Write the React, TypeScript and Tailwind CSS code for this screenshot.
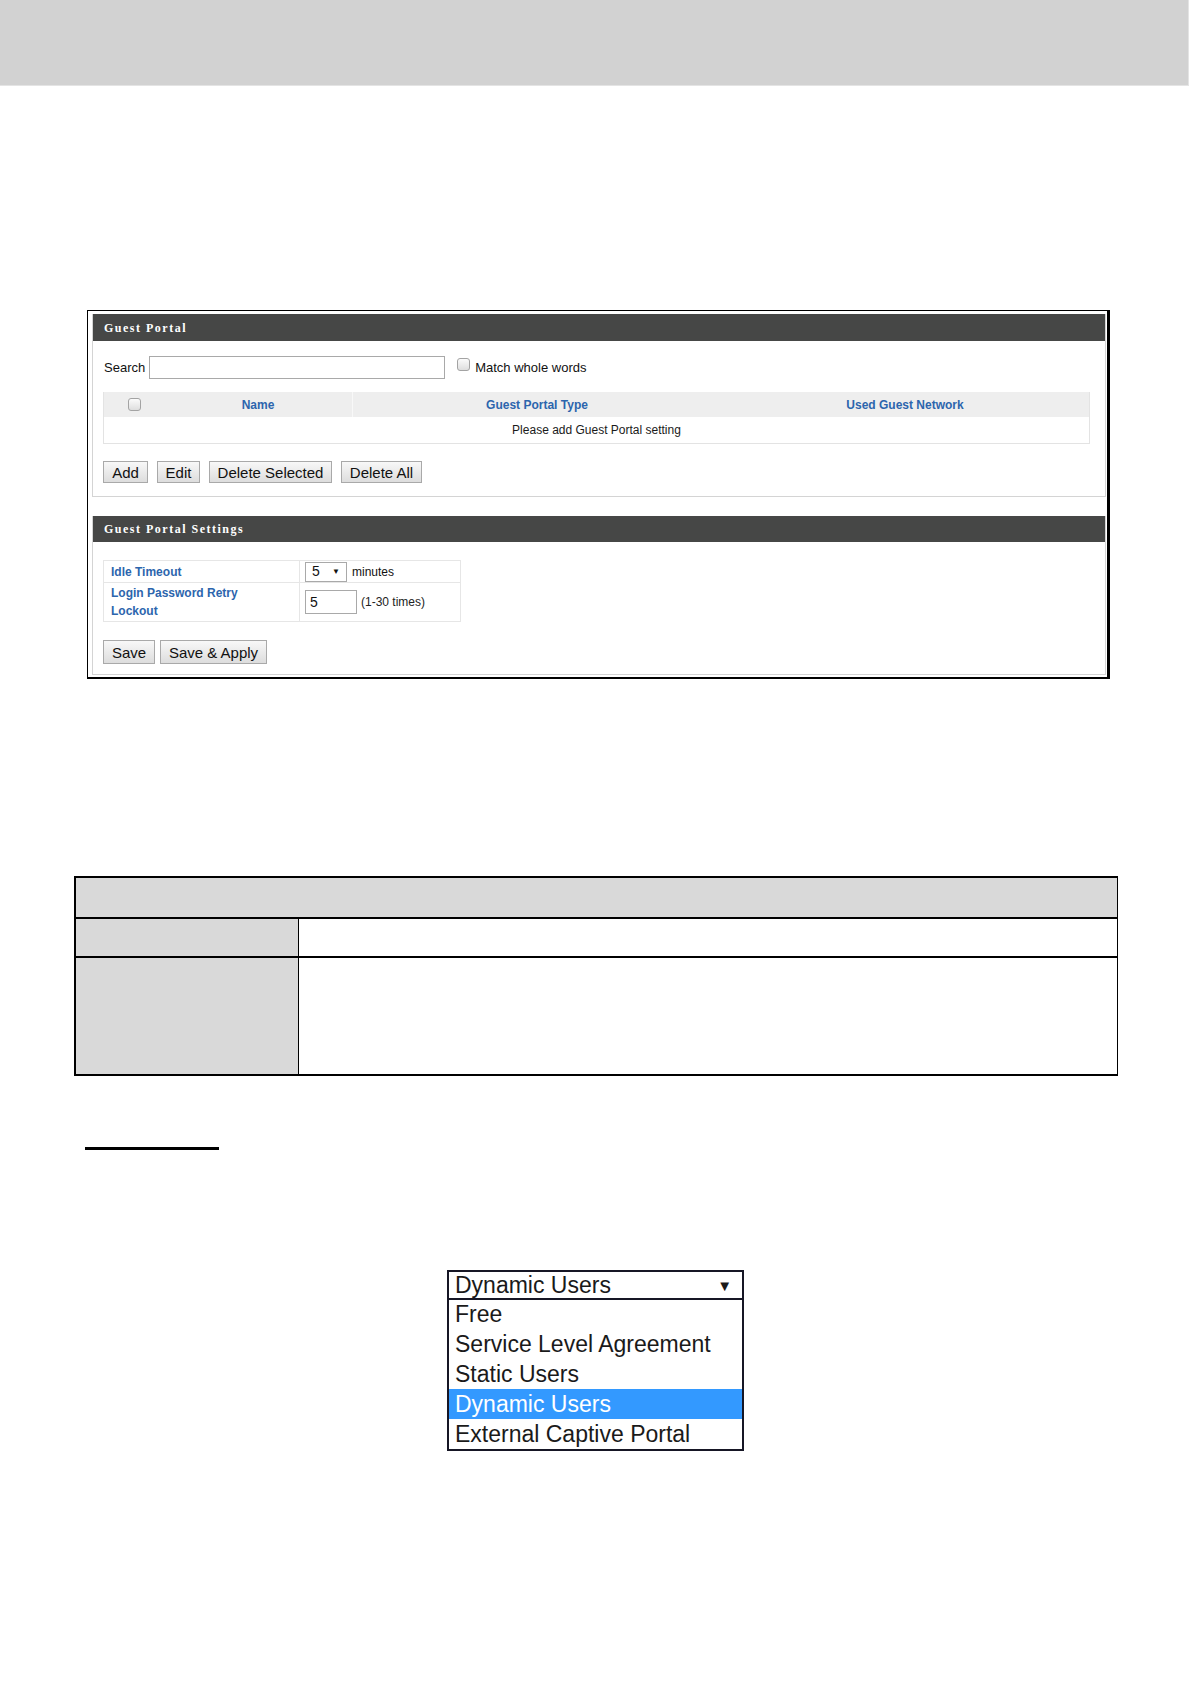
const sans = { fontFamily: '"Liberation Sans", Arial, sans-serif' };

function Btn({ label, w, h }: { label: string; w: string; h: string }) {
  return (
    <div
      className={`${w} ${h} flex items-center justify-center border border-[#a9a9a9] bg-linear-to-b from-[#f8f8f8] to-[#dddddd] text-[15px] text-[#111] leading-none`}
    >
      {label}
    </div>
  );
}

function PanelHeader({ title, h }: { title: string; h: string }) {
  return (
    <div
      className={`${h} bg-[#464746] flex items-center pl-[11px] text-white text-[12px] font-bold tracking-[1.5px]`}
      style={{ fontFamily: '"Liberation Serif", "Times New Roman", serif' }}
    >
      {title}
    </div>
  );
}

function CheckBox() {
  return <div className="w-[13px] h-[13px] rounded-[3px] border border-[#a3a3a3] bg-linear-to-b from-[#fbfbfb] to-[#dedede]" />;
}

const options = ["Free", "Service Level Agreement", "Static Users", "Dynamic Users", "External Captive Portal"];

export default function App() {
  return (
    <div className="w-[1191px] h-[1684px] bg-white relative" style={sans}>
      {/* top grey band */}
      <div className="w-[1189px] h-[86px] bg-[#d2d2d2] border-r border-b border-[#e4e4e4]" />

      {/* screenshot frame */}
      <div className="mt-[224px] ml-[87px] w-[1023px] border-l border-t border-r-[3px] border-b-2 border-black pt-[3px] pl-[4px] pr-[1px] pb-[2px]">
        {/* Guest Portal panel */}
        <div className="border border-t-0 border-[#d4d4d4]">
          <PanelHeader title="Guest Portal" h="h-[27px]" />
          <div className="pl-[10px] pr-[15px] pt-[15px] pb-[13px]">
            <div className="flex items-center h-[23px] text-[13px] text-[#111]">
              <span className="ml-[1px]">Search</span>
              <div className="ml-[4px] w-[296px] h-[23px] border border-[#a9a9a9] bg-white" />
              <div className="ml-[12px] self-start mt-[2px]">
                <CheckBox />
              </div>
              <span className="ml-[5px]">Match whole words</span>
            </div>

            <div className="mt-[13px] w-[987px] border border-t-0 border-[#e3e3e3]">
              <div className="h-[25px] bg-[#eeeeee] flex items-center text-[12px] font-bold text-[#2c65ad]">
                <div className="w-[60px] flex justify-center">
                  <CheckBox />
                </div>
                <div className="w-[189px] h-full flex items-center justify-center border-r border-[#f8f8f8]">Name</div>
                <div className="w-[368px] text-center">Guest Portal Type</div>
                <div className="flex-1 text-center">Used Guest Network</div>
              </div>
              <div className="h-[26px] flex items-center justify-center text-[12px] text-[#1a1a1a]">
                Please add Guest Portal setting
              </div>
            </div>

            <div className="mt-[17px] flex gap-[9px]">
              <Btn label="Add" w="w-[45px]" h="h-[22px]" />
              <Btn label="Edit" w="w-[43px]" h="h-[22px]" />
              <Btn label="Delete Selected" w="w-[123px]" h="h-[22px]" />
              <Btn label="Delete All" w="w-[81px]" h="h-[22px]" />
            </div>
          </div>
        </div>

        {/* Guest Portal Settings panel */}
        <div className="mt-[19px] border border-t-0 border-[#d4d4d4]">
          <PanelHeader title="Guest Portal Settings" h="h-[26px]" />
          <div className="pl-[10px] pt-[18px] pb-[10px]">
            <div className="w-[358px] border border-[#e6e6e6] text-[12px]">
              <div className="flex h-[22px] border-b border-[#e6e6e6]">
                <div className="w-[196px] border-r border-[#e6e6e6] flex items-center pl-[7px] font-bold text-[#2c65ad]">
                  Idle Timeout
                </div>
                <div className="flex-1 flex items-center pl-[5px]">
                  <div className="w-[42px] h-[20px] border border-[#a9a9a9] flex items-center pl-[6px] pr-[6px] justify-between text-[14px] text-[#111]">
                    <span>5</span>
                    <span className="text-[8px]">▼</span>
                  </div>
                  <span className="ml-[5px] text-[#111]">minutes</span>
                </div>
              </div>
              <div className="flex h-[38px]">
                <div className="w-[196px] border-r border-[#e6e6e6] flex items-center pl-[7px] pr-[50px] font-bold text-[#2c65ad] leading-[18px]">
                  Login Password Retry Lockout
                </div>
                <div className="flex-1 flex items-center pl-[5px]">
                  <div className="w-[52px] h-[24px] border border-[#a9a9a9] flex items-center pl-[4px] text-[14px] text-[#111]">
                    5
                  </div>
                  <span className="ml-[4px] text-[#222]">(1-30 times)</span>
                </div>
              </div>
            </div>

            <div className="mt-[18px] flex gap-[5px]">
              <Btn label="Save" w="w-[52px]" h="h-[24px]" />
              <Btn label="Save & Apply" w="w-[107px]" h="h-[24px]" />
            </div>
          </div>
        </div>
      </div>

      {/* description table */}
      <div className="mt-[197px] ml-[74px] w-[1044px] border-t-2 border-l-2 border-b-2 border-r border-black">
        <div className="h-[41px] bg-[#d9d9d9] border-b-2 border-black" />
        <div className="flex h-[39px] border-b-2 border-black">
          <div className="w-[223px] bg-[#d9d9d9] border-r border-black" />
          <div className="flex-1" />
        </div>
        <div className="flex h-[116px]">
          <div className="w-[223px] bg-[#d9d9d9] border-r border-black" />
          <div className="flex-1" />
        </div>
      </div>

      {/* underline bar */}
      <div className="mt-[71px] ml-[85px] w-[134px] h-[3px] bg-black" />

      {/* dropdown */}
      <div className="mt-[120px] ml-[447px] w-[297px] border-2 border-[#161625] text-[23px] text-[#1a1a1a] leading-none">
        <div className="h-[28px] flex items-center justify-between pl-[6px] pr-[10px] border-b-2 border-[#161625]">
          <span>Dynamic Users</span>
          <span className="text-[15px]">▼</span>
        </div>
        {options.map((o) => (
          <div
            key={o}
            className={`h-[29.8px] flex items-center pl-[6px] ${o === "Dynamic Users" ? "bg-[#3399ff] text-white" : ""}`}
          >
            {o}
          </div>
        ))}
      </div>
    </div>
  );
}
